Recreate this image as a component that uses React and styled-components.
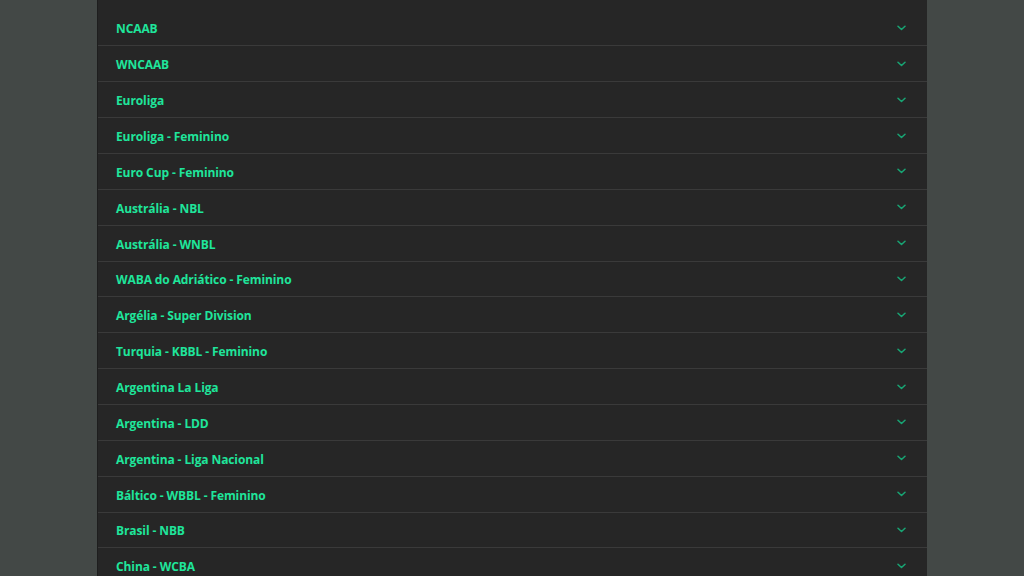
import React from "react";
import styled, { createGlobalStyle } from "styled-components";

const Global = createGlobalStyle`
  html, body { margin: 0; padding: 0; background: #434846; height: 100%; overflow: hidden; }
  #root { height: 100%; }
`;

const Page = styled.div`
  display: flex;
  justify-content: center;
  height: 576px;
  font-family: "Open Sans", "Noto Sans", sans-serif;
`;

const Panel = styled.div`
  width: 830px;
  background: #262626;
  border-left: 1px solid #1e1e1e;
  padding-top: 10.5px;
  box-sizing: border-box;
  overflow: hidden;
`;

const Row = styled.div`
  display: flex;
  align-items: center;
  justify-content: space-between;
  box-sizing: border-box;
  height: 35.86px;
  padding: 2px 21px 0 18px;
  border-bottom: 1px solid #3a3a3a;
`;

const Label = styled.span`
  color: #1fe59b;
  font-weight: 700;
  font-size: 12px;
  letter-spacing: -0.1px;
`;

const Chevron = styled.svg`
  width: 9px;
  height: 6px;
  margin-top: -2px;
`;

const items = [
  "NCAAB",
  "WNCAAB",
  "Euroliga",
  "Euroliga - Feminino",
  "Euro Cup - Feminino",
  "Austrália - NBL",
  "Austrália - WNBL",
  "WABA do Adriático - Feminino",
  "Argélia - Super Division",
  "Turquia - KBBL - Feminino",
  "Argentina La Liga",
  "Argentina - LDD",
  "Argentina - Liga Nacional",
  "Báltico - WBBL - Feminino",
  "Brasil - NBB",
  "China - WCBA",
];

export default function App() {
  return (
    <>
      <Global />
      <Page>
        <Panel>
          {items.map((t) => (
            <Row key={t}>
              <Label>{t}</Label>
              <Chevron viewBox="0 0 9 6">
                <path d="M1 1.2 L4.5 4.5 L8 1.2" fill="none" stroke="#18a574" strokeWidth="1.5" strokeLinecap="round" strokeLinejoin="round" />
              </Chevron>
            </Row>
          ))}
        </Panel>
      </Page>
    </>
  );
}
